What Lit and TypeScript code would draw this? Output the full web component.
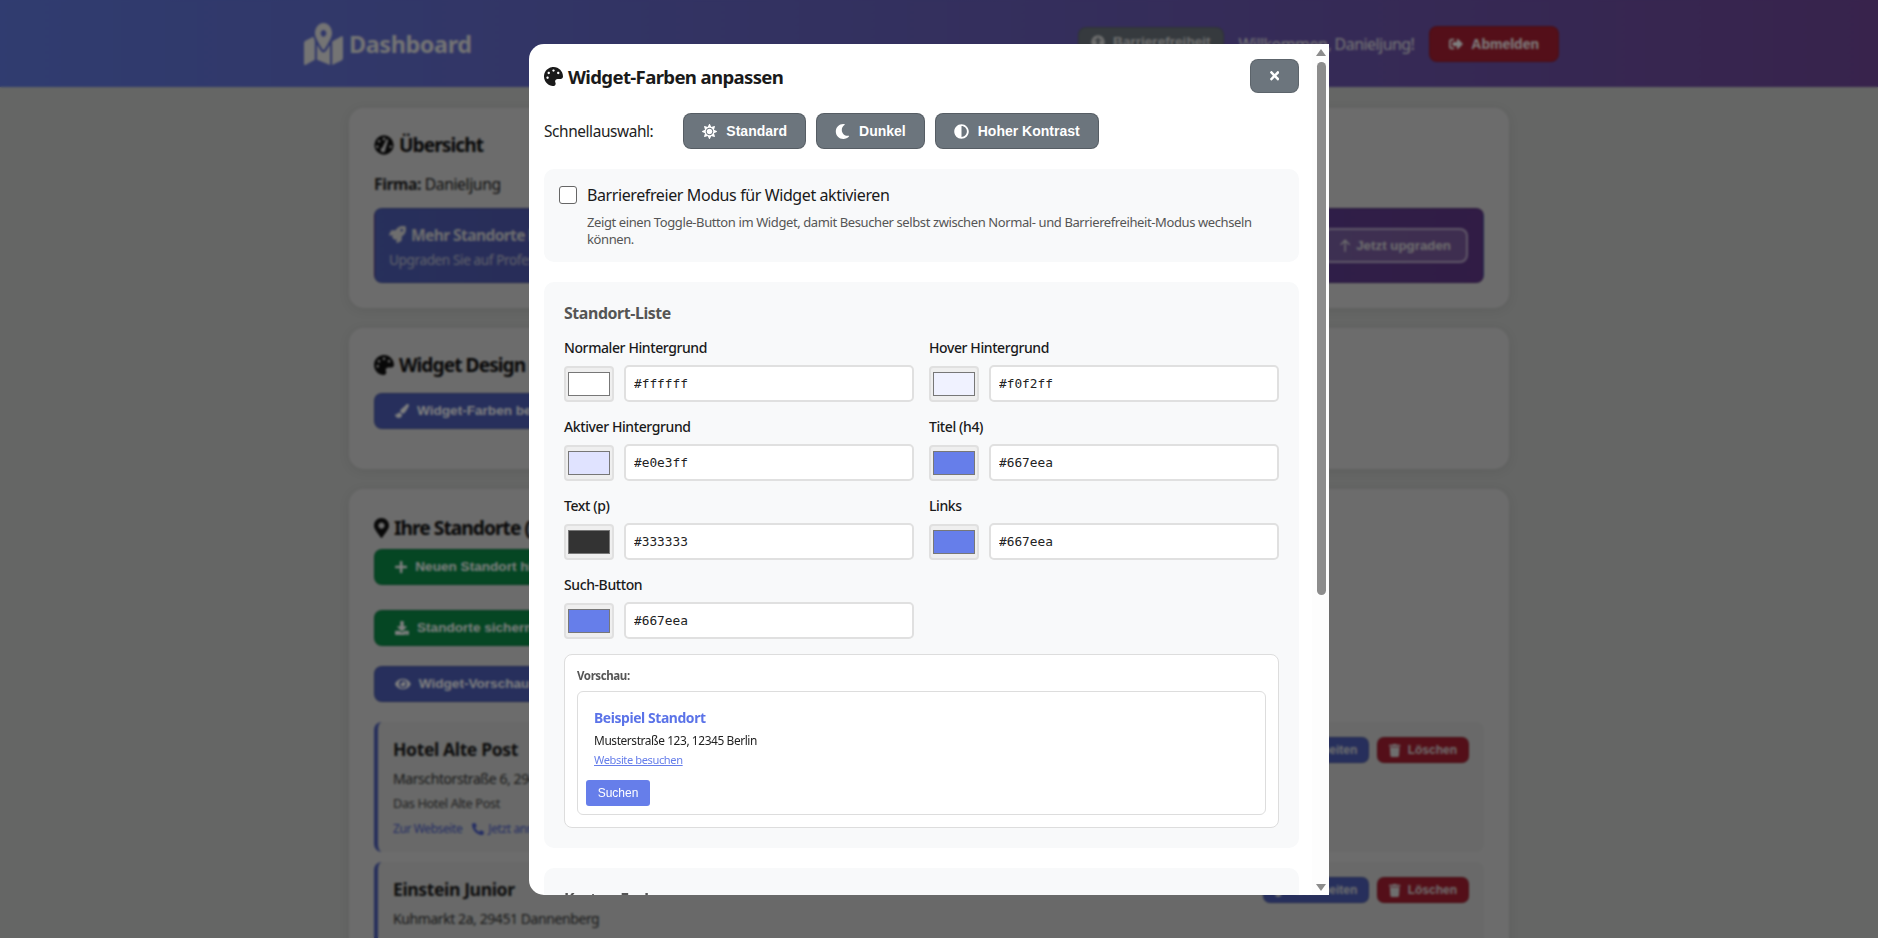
import { LitElement, html, css } from "lit";
import { customElement } from "lit/decorators.js";

const dot = (x: number, y: number, r: number) => `M${x - r} ${y}a${r} ${r} 0 1 0 ${2 * r} 0a${r} ${r} 0 1 0 ${-2 * r} 0z`;

const P: Record<string, [string, string]> = {
  times: ["0 0 352 512", "M242.72 256l100.07-100.07c12.28-12.28 12.28-32.19 0-44.48l-22.24-22.24c-12.28-12.28-32.19-12.28-44.48 0L176 189.28 75.93 89.21c-12.28-12.28-32.19-12.28-44.48 0L9.21 111.45c-12.28 12.28-12.28 32.19 0 44.48L109.28 256 9.21 356.07c-12.28 12.28-12.28 32.19 0 44.48l22.24 22.24c12.28 12.28 32.2 12.28 44.48 0L176 322.72l100.07 100.07c12.28 12.28 32.2 12.28 44.48 0l22.24-22.24c12.28-12.28 12.28-32.19 0-44.48L242.72 256z"],
  pin: ["0 0 384 512", "M172.268 501.67C26.97 291.031 0 269.413 0 192 0 85.961 85.961 0 192 0s192 85.961 192 192c0 77.413-26.97 99.031-172.268 309.67-9.535 13.774-29.93 13.773-39.464 0zM192 272c44.183 0 80-35.817 80-80s-35.817-80-80-80-80 35.817-80 80 35.817 80 80 80z"],
  moon: ["0 0 512 512", "M283.211 512c78.962 0 151.079-35.925 198.857-94.792 7.068-8.708-.639-21.43-11.562-19.35-124.203 23.654-238.262-71.576-238.262-196.954 0-72.222 38.662-138.635 101.498-174.394 9.686-5.512 7.25-20.197-3.756-22.23A258.156 258.156 0 0 0 283.211 0c-141.309 0-256 114.511-256 256 0 141.309 114.511 256 256 256z"],
  adjust: ["0 0 512 512", "M8 256c0 136.966 111.033 248 248 248s248-111.034 248-248S392.966 8 256 8 8 119.033 8 256zm248 184V72c101.705 0 184 82.311 184 184 0 101.705-82.311 184-184 184z"],
  plus: ["0 0 448 512", "M416 208H272V64c0-17.67-14.33-32-32-32h-32c-17.67 0-32 14.33-32 32v144H32c-17.67 0-32 14.33-32 32v32c0 17.67 14.33 32 32 32h144v144c0 17.67 14.33 32 32 32h32c17.67 0 32-14.33 32-32V304h144c17.67 0 32-14.33 32-32v-32c0-17.67-14.33-32-32-32z"],
  eye: ["0 0 576 512", "M572.52 241.4C518.29 135.59 410.93 64 288 64S57.68 135.64 3.48 241.41a32.35 32.35 0 0 0 0 29.19C57.71 376.41 165.07 448 288 448s230.32-71.64 284.52-177.41a32.35 32.35 0 0 0 0-29.19zM288 400a144 144 0 1 1 144-144 143.93 143.93 0 0 1-144 144zm0-240a95.31 95.31 0 0 0-25.31 3.79 47.85 47.85 0 0 1-66.9 66.9A95.78 95.78 0 1 0 288 160z"],
  trash: ["0 0 448 512", "M432 32H312l-9.4-18.7A24 24 0 0 0 281.1 0H166.8a23.72 23.72 0 0 0-21.4 13.3L136 32H16A16 16 0 0 0 0 48v32a16 16 0 0 0 16 16h416a16 16 0 0 0 16-16V48a16 16 0 0 0-16-16zM53.2 467a48 48 0 0 0 47.9 45h245.8a48 48 0 0 0 47.9-45L416 128H32z"],
  phone: ["0 0 512 512", "M497.39 361.8l-112-48a24 24 0 0 0-28 6.9l-49.6 60.6A370.66 370.66 0 0 1 130.6 204.11l60.6-49.6a23.94 23.94 0 0 0 6.9-28l-48-112A24.16 24.16 0 0 0 122.6.61l-104 24A24 24 0 0 0 0 48c0 256.5 207.9 464 464 464a24 24 0 0 0 23.4-18.6l24-104a24.29 24.29 0 0 0-14.01-27.6z"],
  signout: ["0 0 512 512", "M497 273L329 441c-15 15-41 4.5-41-17v-96H152c-13.3 0-24-10.7-24-24v-96c0-13.3 10.7-24 24-24h136V88c0-21.4 25.9-32 41-17l168 168c9.3 9.4 9.3 24.6 0 34zM192 436v-40c0-6.6-5.4-12-12-12H96c-17.7 0-32-14.3-32-32V160c0-17.7 14.3-32 32-32h84c6.6 0 12-5.4 12-12V76c0-6.6-5.4-12-12-12H96c-53 0-96 43-96 96v192c0 53 43 96 96 96h84c6.6 0 12-5.4 12-12z"],
  palette: ["0 0 512 512", "M204.3 5C104.9 24.4 24.8 104.3 5.2 203.4c-37 187 131.7 326.4 258.8 306.7 41.2-6.4 61.4-54.6 42.5-91.7-23.1-45.4 9.9-98.4 60.9-98.4h79.7c35.8 0 64.8-29.6 64.9-65.3C511.5 97.1 368.1-26.9 204.3 5zM96 320c-17.7 0-32-14.3-32-32s14.3-32 32-32 32 14.3 32 32-14.3 32-32 32zm32-128c-17.7 0-32-14.3-32-32s14.3-32 32-32 32 14.3 32 32-14.3 32-32 32zm128-64c-17.7 0-32-14.3-32-32s14.3-32 32-32 32 14.3 32 32-14.3 32-32 32zm128 64c-17.7 0-32-14.3-32-32s14.3-32 32-32 32 14.3 32 32-14.3 32-32 32z"],
  sun: ["0 0 512 512", "M256 160c-52.9 0-96 43.1-96 96s43.1 96 96 96 96-43.1 96-96-43.1-96-96-96zm246.4 80.5l-94.7-47.3 33.5-100.4c4.5-13.6-8.4-26.5-21.9-21.9l-100.4 33.5-47.4-94.8c-6.4-12.8-24.6-12.8-31 0l-47.3 94.7L92.7 70.8c-13.6-4.5-26.5 8.4-21.9 21.9l33.5 100.4-94.7 47.4c-12.8 6.4-12.8 24.6 0 31l94.7 47.3-33.5 100.5c-4.5 13.6 8.4 26.5 21.9 21.9l100.4-33.5 47.3 94.7c6.4 12.8 24.6 12.8 31 0l47.3-94.7 100.4 33.5c13.6 4.5 26.5-8.4 21.9-21.9l-33.5-100.4 94.7-47.3c13-6.5 13-24.7.2-31.1zm-155.9 106c-49.9 49.9-131.1 49.9-181 0-49.9-49.9-49.9-131.1 0-181 49.9-49.9 131.1-49.9 181 0 49.9 49.9 49.9 131.1 0 181z"],
  rocket: ["0 0 512 512", "M505.12 19.09c-1.19-5.53-6.66-11-12.2-12.19C460.72 0 435.51 0 410.41 0 307.18 0 245.27 55.2 199.05 128H94.84c-16.35.02-35.56 11.88-42.89 26.48L2.52 253.3A28.4 28.4 0 0 0 0 264a24 24 0 0 0 24 24h103.82l-22.48 22.47c-11.36 11.36-13 32.26 0 45.25l50.91 50.9c11.16 11.19 32.16 13.16 45.28 0l22.47-22.47V488a24 24 0 0 0 24 24 28.56 28.56 0 0 0 10.71-2.52l98.73-49.39c14.63-7.3 26.5-26.5 26.5-42.86V312.8c72.6-46.31 128.04-108.41 128.04-211.1.02-25.2.02-50.4-6.93-82.61zM384.04 168a40 40 0 1 1 40.01-40 40 40 0 0 1-40.01 40z"],
  download: ["0 0 512 512", "M216 0h80c13.3 0 24 10.7 24 24v168h87.7c17.8 0 26.7 21.5 14.1 34.1L269.7 378.3c-7.5 7.5-19.8 7.5-27.3 0L90.1 226.1c-12.6-12.6-3.7-34.1 14.1-34.1H192V24c0-13.3 10.7-24 24-24zm296 376v112c0 13.3-10.7 24-24 24H24c-13.3 0-24-10.7-24-24V376c0-13.3 10.7-24 24-24h146.7l49 49c20.1 20.1 52.5 20.1 72.6 0l49-49H488c13.3 0 24 10.7 24 24zm-124 88c0-11-9-20-20-20s-20 9-20 20 9 20 20 20 20-9 20-20zm64 0c0-11-9-20-20-20s-20 9-20 20 9 20 20 20 20-9 20-20z"],
  brush: ["0 0 512 512", "M167.02 309.34c-40.12 2.58-76.53 17.86-97.19 72.3-2.35 6.21-8 9.98-14.59 9.98-11.11 0-45.46-27.67-55.25-34.35C0 439.62 37.93 512 128 512c75.86 0 128-43.77 128-120.19 0-3.11-.65-6.08-.97-9.13l-88.01-73.34zM457.89 0c-15.16 0-29.37 6.71-40.21 16.45C213.27 199.05 192 203.34 192 257.09c0 13.7 3.25 26.76 8.73 38.7l63.82 53.18c7.21 1.8 14.64 3.03 22.39 3.03 62.11 0 98.11-45.47 211.16-256.46 7.38-14.35 13.9-29.85 13.9-45.99C512 20.64 486 0 457.89 0z"],
  logo: ["0 0 576 512", "M288 0c-69.59 0-126 56.41-126 126 0 56.26 82.35 158.8 113.9 196.02 6.39 7.54 17.82 7.54 24.2 0C331.65 284.8 414 182.26 414 126 414 56.41 357.59 0 288 0zm0 168c-23.2 0-42-18.8-42-42s18.8-42 42-42 42 18.8 42 42-18.8 42-42 42zM20.12 215.95A32.006 32.006 0 0 0 0 245.66v250.32c0 11.32 11.43 19.06 21.94 14.86L160 448V214.92c-8.84-15.98-16.07-31.54-21.25-46.42L20.12 215.95zM288 359.67c-14.07 0-27.38-6.18-36.51-16.96-19.66-23.2-40.57-49.62-59.49-76.72V448l192 64V266c-18.92 27.09-39.82 53.52-59.49 76.72-9.13 10.77-22.44 16.95-36.51 16.95zm266.06-198.51L416 224v288l139.88-55.95A31.996 31.996 0 0 0 576 426.34V176.02c0-11.32-11.43-19.06-21.94-14.86z"],
  gauge: ["0 0 512 512", dot(256, 256, 248) + dot(256, 100, 34) + dot(130, 160, 34) + dot(84, 300, 34) + dot(428, 300, 34) + "M216 318L318 118a24 24 0 0 1 42 22L292 366a62 62 0 1 1-76-48z"],
  access: ["0 0 512 512", "M256 8a248 248 0 1 0 0 496 248 248 0 0 0 0-496zm0 80a44 44 0 1 1 0 88 44 44 0 0 1 0-88zm120 110l-76 18c-6 60 0 90 26 150 5 28-30 36-42 10l-28-66-28 66c-12 26-47 18-42-10 26-60 32-90 26-150l-76-18c-26-8-16-44 10-38 76 18 144 18 220 0 26-6 36 30 10 38z"],
  up: ["0 0 448 512", "M224 470V60M60 210L224 46l164 164"],
};

const icon = (n: string, cls = "") => html`<svg class="i ${cls}" viewBox=${P[n][0]} aria-hidden="true"><path d=${P[n][1]}></path></svg>`;

const fields = [
  ["Normaler Hintergrund", "#ffffff"],
  ["Hover Hintergrund", "#f0f2ff"],
  ["Aktiver Hintergrund", "#e0e3ff"],
  ["Titel (h4)", "#667eea"],
  ["Text (p)", "#333333"],
  ["Links", "#667eea"],
  ["Such-Button", "#667eea"],
];

@customElement("app-root")
export class AppRoot extends LitElement {
  static styles = css`
    :host { display: block; position: relative; width: 1878px; height: 938px; overflow: hidden; font-family: "Noto Sans", "Open Sans", sans-serif; letter-spacing: -0.025em; color: #222; background: #cacccA; }
    * { box-sizing: border-box; }
    .i { height: 1em; width: auto; fill: currentColor; flex: none; display: block; }
    .eo { fill-rule: evenodd; }
    h2, h3, h4, p { margin: 0; }

    header { height: 87px; padding: 0 319px 0 304px; display: flex; align-items: center; justify-content: space-between; background: linear-gradient(90deg, #6079e0, #704799); color: #e8e8e8; }
    .brand { display: flex; align-items: center; gap: 6px; font-size: 23.4px; font-weight: 700; }
    .logo { width: 39px; height: 42px; fill: currentColor; flex: none; display: block; }
    .top-right { display: flex; align-items: center; gap: 15px; }
    .welcome { font-size: 16px; letter-spacing: -0.035em; }
    .b { display: inline-flex; align-items: center; gap: 8px; height: 36px; padding: 0 20px; border: 1px solid rgba(0,0,0,.14); border-radius: 8px; color: #fff; font: 700 13.6px/1 "Liberation Sans", Arial, sans-serif; letter-spacing: 0; white-space: nowrap; }
    .grey { background: #6c757d; }
    .red { background: #a81f32; }
    .blue { background: #4e5fb8; }
    .green { background: #0a8c47; }
    .access { height: 30px; padding: 0 12px; margin-top: -3px; color: #ddd; }
    .logout { font-size: 14px; padding: 0 19px; }
    .logout .i { font-size: 15px; }

    main { padding: 21px 369px 0 349px; display: flex; flex-direction: column; gap: 20px; }
    .card { background: #d9d9d9; border-radius: 15px; padding: 25px; box-shadow: 0 2px 12px rgba(0,0,0,.08); }
    h2 { display: flex; align-items: center; gap: 5px; font-size: 19.2px; letter-spacing: -0.05em; line-height: 24px; font-weight: 700; color: #111; }
    h2 .i { font-size: 20px; }
    .firma { margin-top: 16px; font-size: 15.7px; line-height: 22px; }
    .upgrade { margin-top: 13px; height: 75px; padding: 0 15px 0 14px; border-radius: 8px; border: 1px solid rgba(0,0,0,.15); background: linear-gradient(90deg, #4f60b8, #62388a); color: #ddd; display: flex; align-items: center; justify-content: space-between; }
    .upgrade strong { display: flex; align-items: center; gap: 5px; font-size: 15.6px; letter-spacing: -0.04em; line-height: 24px; }
    .upgrade strong .i { font-size: 17px; }
    .upgrade small { display: block; margin-top: 3px; font-size: 13.6px; opacity: .8; }
    .up { height: 35px; padding: 0 15px; gap: 5px; border: 2px solid rgba(255,255,255,.5); background: rgba(255,255,255,.18); font-size: 13.33px; color: #ddd; }
    .up .i { fill: none; stroke: currentColor; stroke-width: 52; font-size: 14px; }
    .stack { display: flex; flex-direction: column; align-items: flex-start; }
    .mt16 { margin-top: 16px; } .mb15 { margin-bottom: 15px; }
    .t3 { padding-top: 2px; }
    .m25 { margin-top: 25px; } .m20 { margin-top: 20px; } .m11 { margin-top: 9px; }
    .b .i { font-size: 14px; }
    .item { width: 100%; height: 130px; margin-top: 10px; padding: 15px 15px 0 15px; display: flex; justify-content: space-between; border-left: 4px solid #4e5fb8; border-radius: 8px; background: #d2d3d2; }
    .first { margin-top: 20px; }
    .item h4 { margin-top: 1px; font-size: 17.6px; line-height: 22px; font-weight: 700; color: #1a1a1a; }
    .item .addr { margin-top: 8px; font-size: 14px; letter-spacing: -0.03em; line-height: 22px; color: #333; }
    .item .desc { margin-top: 3px; font-size: 12.8px; line-height: 20px; color: #444; }
    .links { margin-top: 6px; display: flex; align-items: center; gap: 10px; font-size: 12px; line-height: 20px; color: #4a5cc8; }
    .links span { display: flex; align-items: center; gap: 4px; }
    .acts { display: flex; gap: 8px; }
    .sm { height: 26px; padding: 0 11px; gap: 7px; font-size: 12px; border-radius: 7px; color: #ddd; }
    .sm .i { font-size: 13px; }

    .overlay { position: absolute; inset: 0; padding: 44px 20px 0 0; display: flex; justify-content: center; align-items: flex-start; background: rgba(0,0,0,.5); backdrop-filter: blur(1px); }
    .modal { width: 800px; height: 851px; display: flex; background: #fff; border-radius: 15px 0 0 15px; overflow: hidden; }
    .mb { flex: 1; min-width: 0; overflow: hidden; padding: 15px 13px 0 15px; color: #1a1a1a; }
    .bar { width: 17px; flex: none; display: flex; flex-direction: column; align-items: center; padding: 5px 0 4px 1px; background: #fdfdfd; }
    .arrow { width: 0; height: 0; border-left: 5px solid transparent; border-right: 5px solid transparent; }
    .arrow.u { border-bottom: 7px solid #8c8c8c; }
    .arrow.d { border-top: 7px solid #8c8c8c; margin-top: auto; }
    .thumb { margin-top: 6px; width: 9px; height: 533px; border-radius: 5px; background: #8c8c8c; }
    .mh { display: flex; align-items: center; justify-content: space-between; height: 34px; }
    .mh h3 { display: flex; align-items: center; gap: 5px; font-size: 18.6px; letter-spacing: -0.035em; font-weight: 700; line-height: 26px; color: #1a1a1a; margin-top: 1px; }
    .mh h3 .i { font-size: 19px; }
    .close { width: 49px; height: 34px; padding: 0; justify-content: center; }
    .close .i { font-size: 13.5px; }
    .quick { margin-top: 20px; display: flex; align-items: center; gap: 10px; }
    .lab { margin-right: 20px; font-size: 15.4px; color: #222; }
    .q { gap: 9px; padding: 0 18px; font-size: 14px; border-color: rgba(0,0,0,.2); }
    .q .i { font-size: 15px; }
    .section { margin-top: 20px; background: #f8f9fa; border-radius: 10px; }
    .a11y { height: 93px; padding: 15px 15px 0; }
    .a11y label { display: flex; align-items: center; gap: 10px; font-size: 16px; line-height: 22px; font-weight: 400; color: #1a1a1a; }
    .a11y input { appearance: none; width: 18px; height: 18px; margin: 0; background: #fff; border: 1px solid #666; border-radius: 3px; }
    .a11y p { margin: 8px 0 0 28px; font-size: 13px; line-height: 17px; color: #555; }
    .colors { padding: 20px; }
    .colors h4 { font-size: 15.9px; line-height: 22px; font-weight: 700; color: #555; margin-bottom: 14px; }
    .grid { display: grid; grid-template-columns: 350px 350px; gap: 15px; }
    .f label { display: block; font-size: 14px; line-height: 19px; font-weight: 500; color: #1a1a1a; margin-bottom: 8px; }
    .row { display: flex; align-items: center; gap: 10px; }
    .row input[type=color] { width: 50px; height: 36px; padding: 4px 2px; border: 2px solid #e0e0e0; border-radius: 4px; background: #efefef; flex: none; }
    .row input[type=color]::-webkit-color-swatch-wrapper { padding: 0; }
    .row input[type=text] { flex: 1; min-width: 0; height: 37px; padding: 0 8px; border: 2px solid #e0e0e0; border-radius: 5px; font: 12.8px "DejaVu Sans Mono", monospace; letter-spacing: 0; color: #222; background: #fff; }
    .preview { margin-top: 15px; height: 174px; padding: 12px; background: #fff; border: 1px solid #ddd; border-radius: 8px; }
    .pt { font-size: 11.5px; line-height: 17px; font-weight: 700; color: #555; margin-bottom: 7px; }
    .pi { height: 124px; padding: 8px; border: 1px solid #ddd; border-radius: 6px; }
    .pe { padding: 8px 8px 0; }
    .pe strong { display: block; font-size: 13.9px; line-height: 20px; color: #5b73e8; }
    .pe p { margin-top: 4px; font-size: 11.9px; line-height: 16px; color: #222; }
    .pe a { display: block; margin-top: 4px; font-size: 11.1px; line-height: 15px; color: #667eea; text-decoration: underline; }
    .search { margin-top: 13px; width: 64px; height: 26px; border-radius: 3px; background: #667eea; color: #fff; display: flex; align-items: center; justify-content: center; font: 12px "Liberation Sans", Arial, sans-serif; letter-spacing: 0; }
  `;

  item(name: string, addr: string, desc: string, first = false) {
    return html`<div class="item ${first ? "first" : ""}">
      <div>
        <h4>${name}</h4>
        <p class="addr">${addr}</p>
        <p class="desc">${desc}</p>
        <div class="links"><span>Zur Webseite</span><span>${icon("phone")}Jetzt anrufen</span></div>
      </div>
      <div class="acts">
        <span class="b sm blue">${icon("brush")}Bearbeiten</span>
        <span class="b sm red">${icon("trash")}Löschen</span>
      </div>
    </div>`;
  }

  render() {
    return html`
      <header>
        <div class="brand"><svg class="logo" viewBox=${P.logo[0]} preserveAspectRatio="none" aria-hidden="true"><path d=${P.logo[1]}></path></svg><span>Dashboard</span></div>
        <div class="top-right">
          <span class="b grey access">${icon("access")}Barrierefreiheit</span>
          <span class="welcome">Willkommen, Danieljung!</span>
          <span class="b red logout">${icon("signout")}Abmelden</span>
        </div>
      </header>
      <main>
        <section class="card">
          <h2>${icon("gauge", "eo")}Übersicht</h2>
          <p class="firma"><b>Firma:</b> Danieljung</p>
          <div class="upgrade">
            <div>
              <strong>${icon("rocket")}Mehr Standorte benötigt?</strong>
              <small>Upgraden Sie auf Professional für mehr Standorte.</small>
            </div>
            <span class="b up">${icon("up")}Jetzt upgraden</span>
          </div>
        </section>
        <section class="card">
          <h2>${icon("palette")}Widget Design</h2>
          <div class="stack mt16 mb15"><span class="b blue">${icon("brush")}Widget-Farben bearbeiten</span></div>
        </section>
        <section class="card">
          <div class="t3"><h2>${icon("pin")}Ihre Standorte (2)</h2></div>
          <div class="stack">
            <span class="b green m11">${icon("plus")}Neuen Standort hinzufügen</span>
            <span class="b green m25">${icon("download")}Standorte sichern</span>
            <span class="b blue m20">${icon("eye")}Widget-Vorschau</span>
            ${this.item("Hotel Alte Post", "Marschtorstraße 6, 29451 Dannenberg", "Das Hotel Alte Post", true)}
            ${this.item("Einstein Junior", "Kuhmarkt 2a, 29451 Dannenberg", "Ein kleines Stadthotel")}
          </div>
        </section>
      </main>
      <div class="overlay">
        <div class="modal">
          <div class="mb">
            <div class="mh">
              <h3>${icon("palette")}Widget-Farben anpassen</h3>
              <span class="b grey close">${icon("times")}</span>
            </div>
            <div class="quick">
              <span class="lab">Schnellauswahl:</span>
              <span class="b grey q">${icon("sun")}Standard</span>
              <span class="b grey q">${icon("moon")}Dunkel</span>
              <span class="b grey q">${icon("adjust")}Hoher Kontrast</span>
            </div>
            <div class="section a11y">
              <label><input type="checkbox" />Barrierefreier Modus für Widget aktivieren</label>
              <p>Zeigt einen Toggle-Button im Widget, damit Besucher selbst zwischen Normal- und Barrierefreiheit-Modus wechseln<br />können.</p>
            </div>
            <div class="section colors">
              <h4>Standort-Liste</h4>
              <div class="grid">
                ${fields.map(([l, v]) => html`<div class="f">
                  <label>${l}</label>
                  <div class="row"><input type="color" .value=${v} /><input type="text" .value=${v} /></div>
                </div>`)}
              </div>
              <div class="preview">
                <div class="pt">Vorschau:</div>
                <div class="pi">
                  <div class="pe">
                    <strong>Beispiel Standort</strong>
                    <p>Musterstraße 123, 12345 Berlin</p>
                    <a>Website besuchen</a>
                  </div>
                  <div class="search">Suchen</div>
                </div>
              </div>
            </div>
            <div class="section colors"><h4>Karten-Farben</h4></div>
          </div>
          <div class="bar"><div class="arrow u"></div><div class="thumb"></div><div class="arrow d"></div></div>
        </div>
      </div>
    `;
  }
}
